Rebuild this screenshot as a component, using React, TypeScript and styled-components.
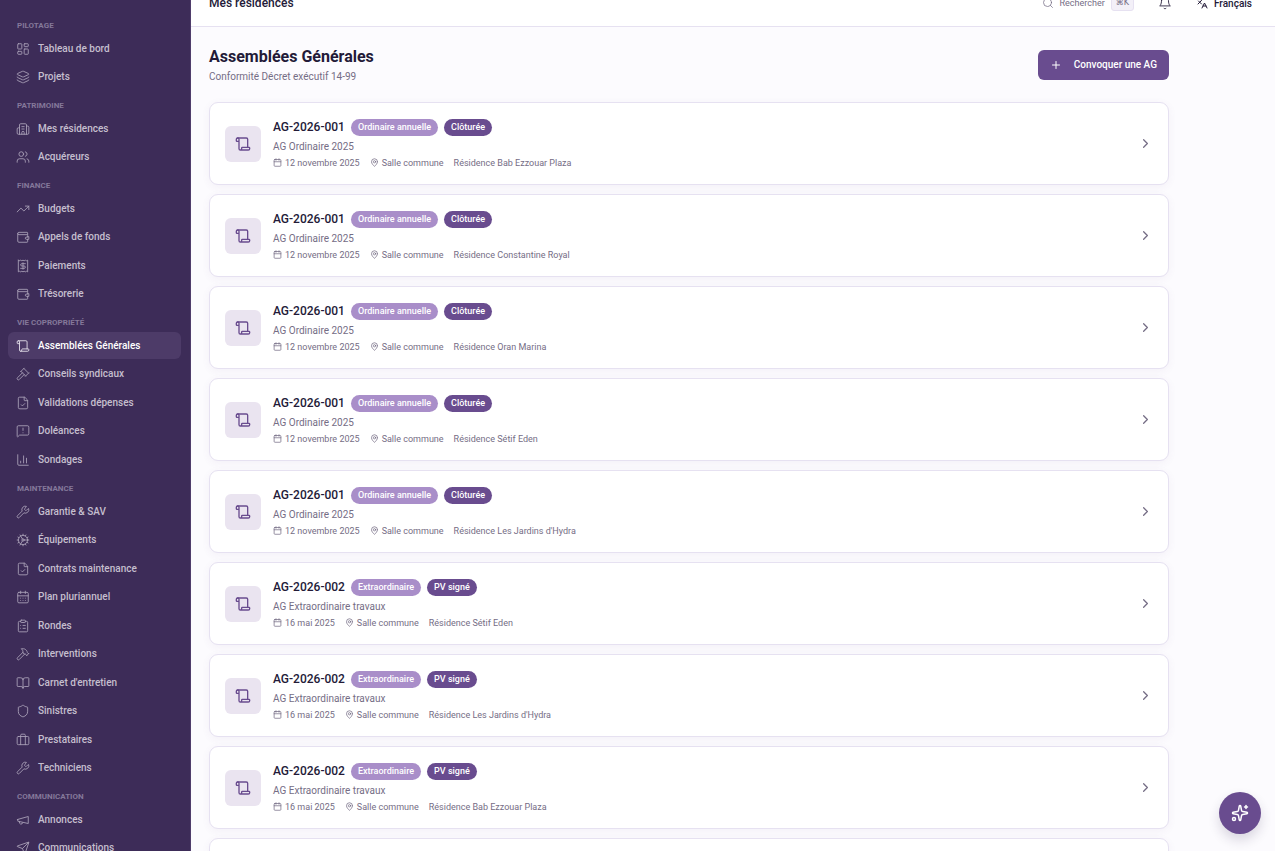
import React from 'react';
import styled, { createGlobalStyle } from 'styled-components';
import {
  BookOpen, Briefcase, Building2, Calendar, CalendarDays, ChartColumn, ChevronRight,
  ClipboardList, Cog, FileCheck, Gavel, Hammer, Languages, Layers, LayoutDashboard, MapPin,
  MessageSquareWarning, Plus, Receipt, Scroll, Search, Send, Shield, Sparkles,
  TrendingUp, Users, Wrench,
} from 'lucide-react';

const color = {
  sidebar: '#3d2c58',
  sidebarActive: '#4d3b68',
  primary: '#694c8f',
  primaryLight: '#a98ec9',
  tint: '#eae4f0',
  border: '#e6e1f1',
  ink: '#231a38',
  muted: '#756d85',
  page: '#fcfbfe',
};

const GlobalStyle = createGlobalStyle`
  *, *::before, *::after { box-sizing: border-box; }
  body {
    margin: 0;
    font-family: Roboto, 'Liberation Sans', sans-serif;
    color: ${color.ink};
    background: ${color.page};
  }
  ul, h1, h2, h3, p { margin: 0; padding: 0; }
  ul { list-style: none; }
  a { color: inherit; text-decoration: none; }
  button { font: inherit; border: 0; cursor: pointer; }
  svg { display: block; flex: none; }
`;

const Shell = styled.div`
  display: flex;
  height: 100vh;
  overflow: hidden;
`;

const Sidebar = styled.nav`
  flex: none;
  width: 191px;
  padding: 10px 9px 0 8px;
  overflow: hidden;
  background: ${color.sidebar};
  border-right: 1px solid #4f3d6b;
`;

const GroupTitle = styled.h2`
  height: 25px;
  padding: 12px 9px 0;
  font-size: 8px;
  line-height: 8px;
  font-weight: 700;
  text-transform: uppercase;
  color: #84789a;
`;

const NavList = styled.ul`
  li:nth-child(even) { margin-top: 1px; }
  li:nth-child(odd) { margin-top: 2px; }
  li:first-child { margin-top: 0; }
`;

const NavLink = styled.a<{ $active?: boolean }>`
  display: flex;
  align-items: center;
  gap: 8px;
  height: 27px;
  padding: 0 8px;
  border-radius: 6px;
  font-size: 10px;
  font-weight: 500;
  white-space: nowrap;
  color: ${p => (p.$active ? '#ffffff' : '#c5bfce')};
  background: ${p => (p.$active ? color.sidebarActive : 'transparent')};
  svg { color: ${p => (p.$active ? '#e8e4ee' : '#aaa1b8')}; }
`;

const Main = styled.div`
  flex: 1;
  min-width: 0;
  overflow: hidden;
`;

const TopBar = styled.header`
  display: flex;
  align-items: center;
  justify-content: space-between;
  height: 47px;
  margin-top: -20px;
  padding: 0 23px 0 18px;
  background: #ffffff;
  border-bottom: 1px solid ${color.border};
`;

const Crumb = styled.p`
  font-size: 12px;
  font-weight: 500;
`;

const Tools = styled.div`
  display: flex;
  align-items: center;
  gap: 24px;
`;

const ToolButton = styled.button<{ $muted?: boolean }>`
  display: flex;
  align-items: center;
  gap: 6px;
  height: 24px;
  padding: 0;
  background: none;
  font-size: ${p => (p.$muted ? 9 : 10)}px;
  font-weight: ${p => (p.$muted ? 400 : 500)};
  color: ${p => (p.$muted ? color.muted : color.ink)};
`;

const Kbd = styled.kbd`
  padding: 0 4px;
  border: 1px solid ${color.border};
  border-radius: 3px;
  background: #f3f0f8;
  font: 8px/14px 'DejaVu Sans', sans-serif;
`;

const Content = styled.main`
  max-width: 996px;
  padding: 18px;
`;

const PageHead = styled.div`
  display: flex;
  align-items: center;
  justify-content: space-between;
  margin-bottom: 18px;
`;

const Title = styled.h1`
  font-size: 16px;
  line-height: 24px;
  font-weight: 700;
`;

const Subtitle = styled.p`
  font-size: 10px;
  line-height: 15px;
  color: ${color.muted};
`;

const PrimaryButton = styled.button`
  display: flex;
  align-items: center;
  gap: 12px;
  height: 30px;
  padding: 0 12px;
  border-radius: 6px;
  background: ${color.primary};
  color: #ffffff;
  font-size: 10px;
  font-weight: 500;
`;

const CardList = styled.ul`
  display: grid;
  gap: 9px;
`;

const Card = styled.a`
  display: flex;
  align-items: center;
  gap: 12px;
  height: 83px;
  padding: 0 15px;
  border: 1px solid ${color.border};
  border-radius: 9px;
  background: #ffffff;
  box-shadow: 0 2px 8px rgba(105, 76, 143, 0.06);
`;

const IconTile = styled.span`
  display: grid;
  place-items: center;
  width: 36px;
  height: 36px;
  border-radius: 6px;
  background: ${color.tint};
  color: ${color.primary};
`;

const CardBody = styled.div`
  flex: 1;
`;

const CardTop = styled.div`
  display: flex;
  align-items: center;
  gap: 6px;
  height: 17px;
`;

const Ref = styled.h3`
  font-size: 12px;
  font-weight: 500;
`;

const Chip = styled.span<{ $soft?: boolean }>`
  padding: 0 7px;
  border-radius: 9px;
  background: ${p => (p.$soft ? color.primaryLight : color.primary)};
  color: #ffffff;
  font-size: 9px;
  line-height: 17px;
  font-weight: 500;
`;

const Subject = styled.p`
  margin-top: 3px;
  font-size: 10px;
  line-height: 15px;
  color: ${color.muted};
`;

const Meta = styled.div`
  display: flex;
  gap: 10px;
  margin-top: 3px;
  font-size: 9px;
  line-height: 12px;
  color: ${color.muted};
`;

const MetaItem = styled.span`
  display: flex;
  align-items: center;
  gap: 3px;
`;

const Assistant = styled.button`
  position: fixed;
  right: 14px;
  bottom: 17px;
  display: grid;
  place-items: center;
  width: 42px;
  height: 42px;
  padding: 0;
  border-radius: 50%;
  background: ${color.primary};
  color: #ffffff;
  box-shadow: 0 6px 12px rgba(40, 25, 70, 0.16);
`;

type IconProps = { size?: number; strokeWidth?: number };
type Icon = React.ComponentType<IconProps>;

const lineIcon = (...paths: string[]): Icon =>
  function LineIcon({ size = 14, strokeWidth = 2 }: IconProps) {
    return (
      <svg
        width={size} height={size} viewBox="0 0 24 24" fill="none" stroke="currentColor"
        strokeWidth={strokeWidth} strokeLinecap="round" strokeLinejoin="round" aria-hidden="true"
      >
        {paths.map(d => <path key={d} d={d} />)}
      </svg>
    );
  };

const Wallet = lineIcon(
  'M20 8V5a1 1 0 0 0-1-1H5a2 2 0 0 0 0 4h14a1 1 0 0 1 1 1v3',
  'M3 6v13a2 2 0 0 0 2 2h14a1 1 0 0 0 1-1v-4',
  'M18 12a2 2 0 0 0 0 4h4v-4Z',
);
const Megaphone = lineIcon('m3 11 18-5v12L3 14v-3z', 'M11.6 16.8a3 3 0 1 1-5.8-1.6');
const Bell = lineIcon('M6 8a6 6 0 0 1 12 0c0 7 3 9 3 9H3s3-2 3-9', 'M10.3 21a1.94 1.94 0 0 0 3.4 0');

type Entry = [string, Icon];

const groups: { title: string; items: Entry[] }[] = [
  { title: 'Pilotage', items: [['Tableau de bord', LayoutDashboard], ['Projets', Layers]] },
  { title: 'Patrimoine', items: [['Mes résidences', Building2], ['Acquéreurs', Users]] },
  {
    title: 'Finance',
    items: [['Budgets', TrendingUp], ['Appels de fonds', Wallet], ['Paiements', Receipt], ['Trésorerie', Wallet]],
  },
  {
    title: 'Vie copropriété',
    items: [
      ['Assemblées Générales', Scroll], ['Conseils syndicaux', Gavel], ['Validations dépenses', FileCheck],
      ['Doléances', MessageSquareWarning], ['Sondages', ChartColumn],
    ],
  },
  {
    title: 'Maintenance',
    items: [
      ['Garantie & SAV', Wrench], ['Équipements', Cog], ['Contrats maintenance', FileCheck],
      ['Plan pluriannuel', CalendarDays], ['Rondes', ClipboardList], ['Interventions', Hammer],
      ["Carnet d'entretien", BookOpen], ['Sinistres', Shield], ['Prestataires', Briefcase], ['Techniciens', Wrench],
    ],
  },
  { title: 'Communication', items: [['Annonces', Megaphone], ['Communications', Send]] },
];

const ordinary = (place: string) => ({
  code: 'AG-2026-001', kind: 'Ordinaire annuelle', status: 'Clôturée',
  subject: 'AG Ordinaire 2025', date: '12 novembre 2025', place,
});
const extraordinary = (place: string) => ({
  code: 'AG-2026-002', kind: 'Extraordinaire', status: 'PV signé',
  subject: 'AG Extraordinaire travaux', date: '16 mai 2025', place,
});

const meetings = [
  ordinary('Résidence Bab Ezzouar Plaza'),
  ordinary('Résidence Constantine Royal'),
  ordinary('Résidence Oran Marina'),
  ordinary('Résidence Sétif Eden'),
  ordinary("Résidence Les Jardins d'Hydra"),
  extraordinary('Résidence Sétif Eden'),
  extraordinary("Résidence Les Jardins d'Hydra"),
  extraordinary('Résidence Bab Ezzouar Plaza'),
  extraordinary('Résidence Constantine Royal'),
];

export default function App() {
  return (
    <Shell>
      <GlobalStyle />
      <Sidebar aria-label="Navigation principale">
        {groups.map(group => (
          <section key={group.title}>
            <GroupTitle>{group.title}</GroupTitle>
            <NavList>
              {group.items.map(([label, ItemIcon]) => (
                <li key={label}>
                  <NavLink href="#" $active={label === 'Assemblées Générales'}>
                    <ItemIcon size={14} strokeWidth={1.5} />
                    {label}
                  </NavLink>
                </li>
              ))}
            </NavList>
          </section>
        ))}
      </Sidebar>
      <Main>
        <TopBar>
          <Crumb>Mes résidences</Crumb>
          <Tools>
            <ToolButton $muted>
              <Search size={12} strokeWidth={1.5} />
              Rechercher
              <Kbd>⌘K</Kbd>
            </ToolButton>
            <ToolButton aria-label="Notifications"><Bell size={14} strokeWidth={1.5} /></ToolButton>
            <ToolButton><Languages size={12} strokeWidth={2} />Français</ToolButton>
          </Tools>
        </TopBar>
        <Content>
          <PageHead>
            <div>
              <Title>Assemblées Générales</Title>
              <Subtitle>Conformité Décret exécutif 14-99</Subtitle>
            </div>
            <PrimaryButton><Plus size={12} strokeWidth={2} />Convoquer une AG</PrimaryButton>
          </PageHead>
          <CardList>
            {meetings.map(m => (
              <li key={m.code + m.place}>
                <Card href="#">
                  <IconTile><Scroll size={16} strokeWidth={2} /></IconTile>
                  <CardBody>
                    <CardTop>
                      <Ref>{m.code}</Ref>
                      <Chip $soft>{m.kind}</Chip>
                      <Chip>{m.status}</Chip>
                    </CardTop>
                    <Subject>{m.subject}</Subject>
                    <Meta>
                      <MetaItem><Calendar size={9} />{m.date}</MetaItem>
                      <MetaItem><MapPin size={9} />Salle commune</MetaItem>
                      <MetaItem>{m.place}</MetaItem>
                    </Meta>
                  </CardBody>
                  <ChevronRight size={15} color={color.muted} />
                </Card>
              </li>
            ))}
          </CardList>
        </Content>
      </Main>
      <Assistant aria-label="Assistant"><Sparkles size={18} /></Assistant>
    </Shell>
  );
}
